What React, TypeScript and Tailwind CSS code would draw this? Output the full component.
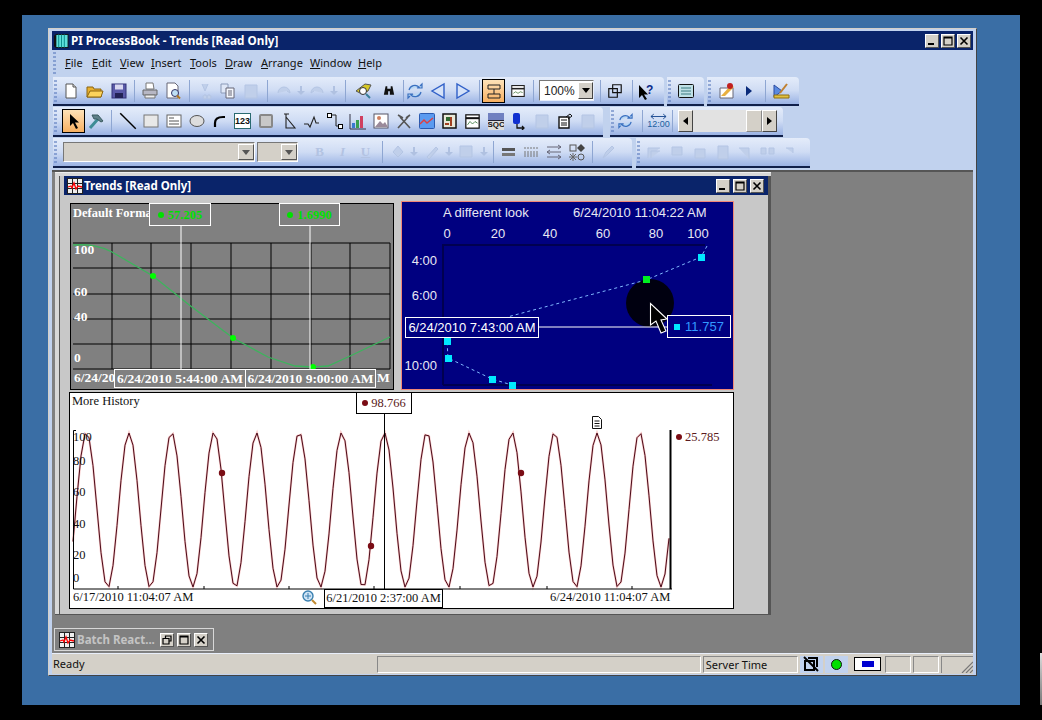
import React from 'react'

const ui = { fontFamily: '"Noto Sans", "Liberation Sans", sans-serif' }

// ---- small helpers ----
const Slot = ({ w = 'w-[23px]', children }: { w?: string; children?: React.ReactNode }) => (
  <div className={`${w} h-[24px] shrink-0 flex items-center justify-center`}>{children}</div>
)

const Sep = ({ w = 'w-[8px]' }: { w?: string }) => (
  <div className={`${w} h-[24px] shrink-0 flex items-center justify-center`}>
    <div className="w-px h-[22px] bg-[#8ea6d2]"></div>
  </div>
)

const Grip = ({ w = 'w-[7px]' }: { w?: string }) => (
  <div className={`${w} h-full shrink-0 flex flex-col justify-center gap-[2px] pl-[1px]`}>
    {[0, 1, 2, 3, 4, 5].map((i) => (
      <div key={i} className="w-[3px] h-[2px] bg-[#5f7fc0] opacity-60"></div>
    ))}
  </div>
)

const Ico = ({ children, size = 'w-[18px] h-[18px]' }: { children: React.ReactNode; size?: string }) => (
  <svg viewBox="0 0 18 18" className={size}>
    {children}
  </svg>
)

const Ghost = ({ d }: { d: string }) => (
  <Ico>
    <path d={d} fill="#c0cfea" stroke="#b4c5e4" strokeWidth="1" />
  </Ico>
)

const Arrow = () => (
  <svg viewBox="0 0 8 10" className="w-[8px] h-[10px]">
    <path d="M3 0h2v5h3l-4 4-4-4h3z" fill="#b0c1e1" />
  </svg>
)

const WinBtn = ({ kind, w = 'w-[14px]' }: { kind: 'min' | 'max' | 'close' | 'restore'; w?: string }) => (
  <div className={`${w} h-[14px] bg-[#d4d0c8] border border-t-white border-l-white border-r-[#555] border-b-[#555] flex items-center justify-center`}>
    <svg viewBox="0 0 10 10" className="w-[10px] h-[10px]">
      {kind === 'min' && <rect x="1" y="7" width="6" height="2" fill="#000" />}
      {kind === 'max' && <path d="M1 1h8v8H1z M1 2h8" fill="none" stroke="#000" strokeWidth="1.2" />}
      {kind === 'close' && <path d="M1.5 1.5l7 7M8.5 1.5l-7 7" stroke="#000" strokeWidth="1.6" />}
      {kind === 'restore' && <path d="M3.5 3V1h5.5v5H7 M1 3.5h6v5.5H1z" fill="none" stroke="#000" strokeWidth="1.2" />}
    </svg>
  </div>
)

const GridIcon = () => (
  <svg viewBox="0 0 16 16" className="w-[16px] h-[16px] shrink-0">
    <rect x="0.5" y="0.5" width="15" height="15" fill="#eee" stroke="#222" />
    <path d="M5.5 0v16M10.5 0v16M0 5.5h16M0 10.5h16" stroke="#222" />
    <path d="M1 9l3-1 1 2 2-5 2 6 2-3 4 1" fill="none" stroke="#f00" strokeWidth="1.3" />
  </svg>
)

const Combo = ({ w, bg = 'bg-[#d4d0c8]', children }: { w: string; bg?: string; children?: React.ReactNode }) => (
  <div className={`${w} ${bg} h-[20px] shrink-0 border border-t-[#777] border-l-[#777] border-r-white border-b-white flex items-center justify-end`}>
    <div className="flex-1 pl-[4px] text-[12px] text-[#222]">{children}</div>
    <div className="w-[16px] h-[16px] bg-[#d4d0c8] border border-t-white border-l-white border-r-[#555] border-b-[#555] flex items-center justify-center">
      <svg viewBox="0 0 8 5" className="w-[8px] h-[5px]">
        <path d="M0 0h8L4 5z" fill="#555" />
      </svg>
    </div>
  </div>
)

const Band = ({ w, children }: { w: string; children: React.ReactNode }) => (
  <div className={`${w} h-full shrink-0 flex items-center rounded-tr-[4px] border-b-2 border-[#10204a] bg-linear-to-b from-[#e4ecfa] via-[#cfdcf4] to-[#9bb3e4]`}>
    {children}
  </div>
)

// ---- toolbar icons ----
const NewDoc = () => (
  <Ico>
    <path d="M4 2h7l3 3v11H4z" fill="#fff" stroke="#555" />
    <path d="M11 2v3h3" fill="#ddd" stroke="#555" />
  </Ico>
)
const OpenDoc = () => (
  <Ico>
    <path d="M1 5h6l1 2h7v8H1z" fill="#e8b030" stroke="#8a6410" />
    <path d="M4 9h13l-2 6H1z" fill="#fcd35c" stroke="#8a6410" />
  </Ico>
)
const Save = () => (
  <Ico>
    <rect x="2" y="2" width="14" height="14" fill="#5a5aa8" stroke="#333378" />
    <rect x="5" y="2.5" width="8" height="5" fill="#d8d8f0" />
    <rect x="5" y="11" width="8" height="5" fill="#222255" />
  </Ico>
)
const Printer = () => (
  <Ico>
    <path d="M5 1h7l1 6H5z" fill="#fff" stroke="#777" />
    <path d="M2 8h14v5H2z" fill="#b7b7c4" stroke="#666" />
    <path d="M4 13h10v3H4z" fill="#eee" stroke="#777" />
  </Ico>
)
const Preview = () => (
  <Ico>
    <path d="M3 1h8l3 3v12H3z" fill="#fff" stroke="#667" />
    <circle cx="11" cy="11" r="3.5" fill="#bfe0f5" stroke="#336" />
    <path d="M13 13.5l3 3" stroke="#b07820" strokeWidth="2" />
  </Ico>
)
const Refresh = () => (
  <Ico>
    <path d="M3 8a6 6 0 0 1 10-3l-2 1h5V2l-2 2M15 10a6 6 0 0 1-10 3l2-1H2v4l2-2" fill="#b8d8f4" stroke="#3a70c0" strokeWidth="1.2" />
  </Ico>
)
const Play = ({ back = false }: { back?: boolean }) => (
  <Ico>
    <path d={back ? 'M15 2v14L3 9z' : 'M3 2v14l12-7z'} fill="#d5e2f8" stroke="#3060c8" strokeWidth="1.4" />
  </Ico>
)
const Hammer = () => (
  <Ico>
    <path d="M3 16L11 7" stroke="#3e8c96" strokeWidth="3" />
    <path d="M5 3h6l5 6-2 1-4-3-3 0z" fill="#5f8088" stroke="#3a5a60" />
  </Ico>
)

const Row1 = () => (
  <div className="h-[29px] flex gap-[3px]">
    <Band w="w-[611px]">
      <Grip w="w-[6px]" />
      <Slot w="w-[24px]"><NewDoc /></Slot>
      <Slot w="w-[24px]"><OpenDoc /></Slot>
      <Slot w="w-[24px]"><Save /></Slot>
      <Sep w="w-[7px]" />
      <Slot><Printer /></Slot>
      <Slot w="w-[24px]"><Preview /></Slot>
      <Sep />
      <Slot><Ghost d="M6 2l3 7 3-7M7 15a2 2 0 1 0 0-.1M11 15a2 2 0 1 0 0-.1" /></Slot>
      <Slot>
        <Ico>
          <path d="M2 2h7v9H2z" fill="#dfe7f7" stroke="#8a9ab8" />
          <path d="M7 6h8v10H7z" fill="#f4f7fd" stroke="#667" />
          <path d="M9 9h4M9 11h4M9 13h4" stroke="#667" />
        </Ico>
      </Slot>
      <Slot><Ghost d="M3 3h12v13H3z" /></Slot>
      <Sep w="w-[10px]" />
      <Slot w="w-[24px]"><Ghost d="M3 11a6 6 0 0 1 12 0l-3-2" /></Slot>
      <Slot w="w-[9px]"><Arrow /></Slot>
      <Slot><Ghost d="M15 11a6 6 0 0 0-12 0l3-2" /></Slot>
      <Slot w="w-[11px]"><Arrow /></Slot>
      <Sep w="w-[13px]" />
      <Slot w="w-[24px]">
        <Ico>
          <path d="M1 9l9-7 6 1-3 6-6 3z" fill="#d6c826" stroke="#555" />
          <circle cx="8" cy="9" r="3.5" fill="#fff" stroke="#333" />
          <path d="M11 12l4 4" stroke="#3a7f9a" strokeWidth="2" />
        </Ico>
      </Slot>
      <Slot w="w-[26px]">
        <svg viewBox="0 0 14 12" className="w-[12px] h-[11px]">
          <path d="M3 1h2v3h4V1h2l2 10H8V7H6v4H1z" fill="#111" />
        </svg>
      </Slot>
      <Sep w="w-[2px]" />
      <Slot w="w-[22px]"><Refresh /></Slot>
      <Slot w="w-[24px]"><Play back /></Slot>
      <Slot w="w-[26px]"><Play /></Slot>
      <Sep w="w-[6px]" />
      <div className="w-[23px] h-[24px] shrink-0 flex items-center justify-center bg-linear-to-b from-[#fde2b8] to-[#f8b060] border border-black">
        <Ico>
          <path d="M3 3h12v4H3zM3 12h12v4H3zM9 7v5" fill="none" stroke="#222" />
        </Ico>
      </div>
      <Slot w="w-[25px]">
        <Ico size="w-[14px] h-[14px]">
          <rect x="1" y="2" width="16" height="14" fill="#fff" stroke="#222" strokeWidth="1.4" />
          <path d="M1 6h16" stroke="#222" strokeWidth="2" />
          <path d="M3 12l3-2 3 2 3-2 3 1" fill="none" stroke="#4a7a40" />
        </Ico>
      </Slot>
      <Sep w="w-[6px]" />
      <div className="w-[3px]"></div>
      <div className="w-[55px] h-[21px] shrink-0 bg-white border border-t-[#777] border-l-[#777] border-b-[#e8eefa] border-r-[#e8eefa] flex items-center">
        <span className="flex-1 pl-[4px] text-[12px] text-[#222]" style={{ fontFamily: 'Liberation Sans' }}>100%</span>
        <div className="w-[15px] h-[17px] bg-[#d4d0c8] border border-t-white border-l-white border-r-[#444] border-b-[#444] flex items-center justify-center">
          <svg viewBox="0 0 8 5" className="w-[8px] h-[5px]"><path d="M0 0h8L4 5z" fill="#000" /></svg>
        </div>
      </div>
      <Sep w="w-[12px]" />
      <Slot w="w-[18px]">
        <Ico size="w-[14px] h-[14px]">
          <path d="M6 1h11v10H6z M1 6h11v11H1z" fill="none" stroke="#111" strokeWidth="1.5" />
        </Ico>
      </Slot>
      <Sep w="w-[16px]" />
      <div className="w-[14px] h-[24px] shrink-0 flex items-center justify-center">
        <Ico size="w-[18px] h-[18px] shrink-0">
          <path d="M1 3v13l3-3 3 5 2-1-3-4.5h4z" fill="#000" />
          <text x="8" y="12" fontSize="12" fontWeight="bold" fill="#0a2a8a" fontFamily="Liberation Sans">?</text>
        </Ico>
      </div>
    </Band>
    <Band w="w-[37px]">
      <Grip w="w-[7px]" />
      <div className="w-[24px] flex justify-center">
        <svg viewBox="0 0 16 14" className="w-[16px] h-[14px]">
          <rect x="0.5" y="0.5" width="15" height="13" rx="1" fill="#bfe0e6" stroke="#111" />
          <path d="M3 4h10M3 7h10M3 10h10" stroke="#3a7a80" />
        </svg>
      </div>
    </Band>
    <Band w="w-[92px]">
      <Grip w="w-[8px]" />
      <Slot w="w-[24px]">
        <Ico>
          <path d="M2 6h13v10H2z" fill="#fff" stroke="#667" />
          <path d="M3 14L13 3l3 2-9 9z" fill="#e8b040" />
          <circle cx="12" cy="4" r="3" fill="#c02020" />
        </Ico>
      </Slot>
      <Slot w="w-[20px]">
        <svg viewBox="0 0 6 10" className="w-[6px] h-[10px]"><path d="M0 0l6 5-6 5z" fill="#0a2a7a" /></svg>
      </Slot>
      <Sep w="w-[12px]" />
      <Slot w="w-[20px]">
        <Ico>
          <path d="M2 3v12l8-6z" fill="#5a8ae0" stroke="#2a4aa0" />
          <path d="M2 13h15v3H2z" fill="#e0c040" stroke="#907010" />
          <path d="M8 11l7-9" stroke="#c08030" strokeWidth="2" />
        </Ico>
      </Slot>
    </Band>
  </div>
)

const Row2 = () => (
  <div className="h-[30px] mt-px flex gap-[7px]">
    <Band w="w-[550px]">
      <Grip w="w-[9px]" />
      <div className="w-[23px] h-[24px] shrink-0 flex items-center justify-center bg-linear-to-b from-[#fde2b8] to-[#f8b060] border border-black">
        <Ico><path d="M5 2v12l3-3 3 6 2-1-3-5.5h4z" fill="#000" /></Ico>
      </div>
      <Slot w="w-[22px]"><Hammer /></Slot>
      <Sep w="w-[9px]" />
      <Slot><Ico size="w-[20px] h-[20px]"><path d="M2 2l14 14" stroke="#000" strokeWidth="1.3" /></Ico></Slot>
      <Slot><Ico><rect x="2" y="3" width="14" height="12" fill="#e8e8e8" stroke="#777" /></Ico></Slot>
      <Slot>
        <Ico>
          <rect x="2" y="3" width="14" height="12" fill="#fff" stroke="#666" />
          <path d="M4 6h5M4 9h10M4 12h10" stroke="#555" />
        </Ico>
      </Slot>
      <Slot><Ico><ellipse cx="9" cy="9" rx="7" ry="5.5" fill="#ddd" stroke="#555" /></Ico></Slot>
      <Slot><Ico><path d="M4 15V11Q4 5 12 5h2" fill="none" stroke="#000" strokeWidth="2.2" /></Ico></Slot>
      <Slot>
        <div className="w-[17px] h-[16px] bg-white border border-[#2a6a70] flex items-center justify-center text-[9px] font-bold text-[#111] leading-none" style={{ fontFamily: 'Liberation Sans' }}>123</div>
      </Slot>
      <Slot><div className="w-[14px] h-[14px] bg-[#c8c8c8] border-2 border-[#888] rounded-[2px]"></div></Slot>
      <Slot><Ico><path d="M4 2h5M6 2v14h9L6 5" fill="none" stroke="#222" strokeWidth="1.1" /></Ico></Slot>
      <Slot><Ico><path d="M1 12h4l2 3 4-10 2 6h3" fill="none" stroke="#222" strokeWidth="1.1" /></Ico></Slot>
      <Slot>
        <Ico>
          <path d="M4 3h6v11h4" fill="none" stroke="#222" />
          <rect x="1.5" y="1.5" width="4" height="4" fill="#fff" stroke="#000" />
          <rect x="12.5" y="12.5" width="4" height="4" fill="#fff" stroke="#000" />
        </Ico>
      </Slot>
      <Slot>
        <Ico>
          <path d="M1 2v15h16" fill="none" stroke="#334" />
          <rect x="3" y="11" width="3" height="5" fill="#3a7ad0" />
          <rect x="7" y="8" width="3" height="8" fill="#3aa050" />
          <rect x="11" y="4" width="3" height="12" fill="#d04060" />
        </Ico>
      </Slot>
      <Slot>
        <Ico>
          <rect x="2" y="2" width="14" height="14" fill="#fff" stroke="#556" />
          <path d="M3 15l5-6 3 3 2-2 3 5z" fill="#9a8a9a" />
          <circle cx="7" cy="6" r="2" fill="#d08060" />
        </Ico>
      </Slot>
      <Slot><Ico><path d="M3 16L13 5M15 16L5 5M3 3l5 3M15 3l-4 3" stroke="#555" strokeWidth="1.6" fill="none" /></Ico></Slot>
      <Slot>
        <Ico>
          <rect x="1.5" y="1.5" width="15" height="15" rx="1" fill="#5a9af0" stroke="#2a5ab0" />
          <path d="M2 12l4-4 3 3 6-5" fill="none" stroke="#e04040" strokeWidth="1.5" />
        </Ico>
      </Slot>
      <Slot>
        <Ico>
          <rect x="2" y="2" width="13" height="14" fill="#e8e8d8" stroke="#111" strokeWidth="1.5" />
          <path d="M5 5h4v4H5z" fill="#306830" />
          <path d="M10 5v9M4 12h4" stroke="#a04020" strokeWidth="2" />
        </Ico>
      </Slot>
      <Slot>
        <Ico size="w-[15px] h-[15px]">
          <rect x="1" y="1" width="16" height="16" fill="#fff" stroke="#111" strokeWidth="1.5" />
          <path d="M1 5h16" stroke="#111" strokeWidth="2.4" />
          <path d="M3 13l3-4 3 3 3-3 3 2" fill="none" stroke="#3a7a40" />
        </Ico>
      </Slot>
      <Slot>
        <div className="w-[16px] h-[17px] flex flex-col overflow-hidden leading-none">
          <div className="h-[8px] bg-[#7080c0] border-b border-[#223]"></div>
          <div className="text-[8px] font-bold text-[#111] bg-[#ddd] h-[9px] text-center" style={{ fontFamily: 'Liberation Sans' }}>SQC</div>
        </div>
      </Slot>
      <Slot>
        <Ico>
          <rect x="3" y="1" width="7" height="11" rx="2" fill="#1030d0" />
          <path d="M7 12v4h7M12 14l2 2-2 2" fill="none" stroke="#111" strokeWidth="1.3" />
        </Ico>
      </Slot>
      <Slot><Ghost d="M3 3h12v13H3z" /></Slot>
      <Slot>
        <Ico>
          <path d="M3 5h10v11H3z" fill="#fff" stroke="#111" strokeWidth="1.4" />
          <path d="M5 8h6M5 11h6M5 13h6M10 5l4-3 2 2-4 3" fill="none" stroke="#111" />
        </Ico>
      </Slot>
      <Slot><Ghost d="M3 3h12v13H3z" /></Slot>
    </Band>
    <Band w="w-[173px]">
      <Grip w="w-[7px]" />
      <Slot w="w-[17px]"><Refresh /></Slot>
      <Sep w="w-[16px]" />
      <div className="w-[17px] shrink-0 flex flex-col items-center leading-none">
        <svg viewBox="0 0 18 7" className="w-[17px] h-[7px] shrink-0"><path d="M1 3.5h16M4 1L1 3.5 4 6M14 1l3 2.5L14 6" fill="none" stroke="#1c4a90" /></svg>
        <span className="text-[9px] text-[#2060a0]" style={{ fontFamily: 'Liberation Sans' }}>12:00</span>
      </div>
      <Sep w="w-[11px]" />
      <div className="w-[99px] h-[22px] shrink-0 flex bg-[#e2e2e2]">
        <div className="w-[15px] bg-[#d4d0c8] border border-t-white border-l-white border-r-[#444] border-b-[#444] flex items-center justify-center">
          <svg viewBox="0 0 5 8" className="w-[5px] h-[8px]"><path d="M5 0v8L0 4z" fill="#000" /></svg>
        </div>
        <div className="w-[53px]"></div>
        <div className="w-[16px] bg-[#d4d0c8] border border-t-white border-l-white border-r-[#888] border-b-[#888]"></div>
        <div className="w-[15px] bg-[#d4d0c8] border border-t-white border-l-white border-r-[#444] border-b-[#444] flex items-center justify-center">
          <svg viewBox="0 0 5 8" className="w-[5px] h-[8px]"><path d="M0 0v8l5-4z" fill="#000" /></svg>
        </div>
      </div>
    </Band>
  </div>
)

const ghostLetter = 'w-[23px] text-center text-[13px] font-bold text-[#b3c3e2] shrink-0'

const Row3 = () => (
  <div className="h-[30px] mt-px flex gap-[4px]">
    <Band w="w-[579px]">
      <Grip w="w-[10px]" />
      <Combo w="w-[192px]" />
      <div className="w-[2px]"></div>
      <Combo w="w-[41px]" />
      <div className="w-[10px]"></div>
      <div className={ghostLetter} style={{ fontFamily: 'Liberation Serif' }}>B</div>
      <div className={ghostLetter} style={{ fontFamily: 'Liberation Serif' }}><i>I</i></div>
      <div className={ghostLetter} style={{ fontFamily: 'Liberation Serif' }}><u>U</u></div>
      <Sep w="w-[11px]" />
      <Slot w="w-[20px]"><Ghost d="M4 9l5-6 5 6-5 5z" /></Slot>
      <Slot w="w-[12px]"><Arrow /></Slot>
      <Slot w="w-[24px]"><Ghost d="M4 14L13 4l2 2-9 10z" /></Slot>
      <Slot w="w-[10px]"><Arrow /></Slot>
      <Slot w="w-[24px]"><Ghost d="M3 3h12v11H3z" /></Slot>
      <Slot w="w-[12px]"><Arrow /></Slot>
      <Sep w="w-[7px]" />
      <Slot w="w-[22px]">
        <div className="w-[13px] h-[8px] flex flex-col justify-between">
          <div className="h-[3px] bg-[#555]"></div>
          <div className="h-[3px] bg-[#777]"></div>
        </div>
      </Slot>
      <Slot>
        <Ico><path d="M2 5h14M2 9h14M2 11h14M2 13h14" stroke="#777" strokeDasharray="2 1" /></Ico>
      </Slot>
      <Slot>
        <Ico><path d="M2 4h14M2 14h14M2 9h14M5 7L2 9l3 2M13 2l3 2-3 2M13 12l3 2-3 2" fill="none" stroke="#667" /></Ico>
      </Slot>
      <Slot>
        <Ico>
          <rect x="2" y="2" width="6" height="6" fill="none" stroke="#555" />
          <path d="M13 1l4 4-4 4-4-4z" fill="#444" />
          <path d="M2 11l6 6M8 11l-6 6M5 10v8M1 14h8" stroke="#666" />
          <circle cx="13" cy="14" r="3" fill="none" stroke="#555" />
        </Ico>
      </Slot>
      <Sep w="w-[9px]" />
      <Slot w="w-[22px]"><Ghost d="M4 15l3-6 6-6 2 2-6 6z" /></Slot>
    </Band>
    <Band w="w-[174px]">
      <Grip w="w-[7px]" />
      <Slot w="w-[22px]"><Ghost d="M3 15V5h12M6 15V8h9" /></Slot>
      <Slot w="w-[23px]"><Ghost d="M4 4h10v8H4z" /></Slot>
      <Slot w="w-[23px]"><Ghost d="M4 15V6h10v9z" /></Slot>
      <Slot w="w-[24px]"><Ghost d="M4 3h10v13H4z" /></Slot>
      <Slot w="w-[20px]"><Ghost d="M3 5h10v11" /></Slot>
      <Slot w="w-[24px]"><Ghost d="M3 5h5v6H3zM11 5h5v6h-5z" /></Slot>
      <Slot w="w-[20px]"><Ghost d="M6 5h7v5" /></Slot>
    </Band>
  </div>
)

// ---- charts ----
const Tick = ({ c, className }: { c: string; className: string }) => (
  <span className={`inline-block w-[6px] h-[6px] ${c} ${className}`}></span>
)

const GrayChart = () => {
  const serif = { fontFamily: '"Liberation Serif", serif' }
  return (
    <div className="relative w-[324px] h-[187px] ml-px mt-[2px] shrink-0 bg-[#808080] border border-black text-white font-bold text-[13.5px] leading-[14px] whitespace-nowrap" style={serif}>
      <svg viewBox="71 204 322 185" className="absolute left-0 top-0 w-[322px] h-[185px]">
        <path d="M73 243H390M73 268H390M73 294H390M73 319H390M73 344H390M73 369H390M112 243V369M151 243V369M191 243V369M231 243V369M271 243V369M311 243V369M350 243V369M390 243V369" stroke="#000" strokeWidth="1" fill="none" />
        <path d="M73 245C90 244 100 246 112 252L153 276L188 304L233 338L268 357L295 366L313 367L328 366L348 357L390 337" fill="none" stroke="#3cb45c" strokeWidth="1.3" />
        <circle cx="153" cy="276" r="3" fill="#00ff00" />
        <circle cx="233" cy="338" r="3" fill="#00ff00" />
        <circle cx="313" cy="367" r="3" fill="#00ff00" />
        <path d="M181 226V369M310 226V369" stroke="#fff" />
      </svg>
      <div className="absolute left-[2px] top-[2px] text-[12.5px]">Default Forma</div>
      <div className="absolute left-[78px] top-[-1px] w-[62px] h-[23px] bg-[#808080] border border-white text-[#00e000] flex items-center justify-center gap-[4px] text-[12.5px]">
        <Tick c="bg-[#00e000]" className="rounded-full" />57.205
      </div>
      <div className="absolute left-[208px] top-[-1px] w-[61px] h-[23px] bg-[#808080] border border-white text-[#00e000] flex items-center justify-center gap-[4px] text-[12.5px]">
        <Tick c="bg-[#00e000]" className="rounded-full" />1.6990
      </div>
      <div className="absolute left-[3px] top-[39px]">100</div>
      <div className="absolute left-[3px] top-[81px]">60</div>
      <div className="absolute left-[3px] top-[106px]">40</div>
      <div className="absolute left-[3px] top-[147px]">0</div>
      <div className="absolute left-[3px] top-[167px]">6/24/20</div>
      <div className="absolute left-[306px] top-[167px]">M</div>
      <div className="absolute left-[43px] top-[165px] w-[132px] h-[19px] bg-[#808080] border border-white flex items-center justify-center">6/24/2010 5:44:00 AM</div>
      <div className="absolute left-[174px] top-[165px] w-[131px] h-[19px] bg-[#808080] border border-white flex items-center justify-center">6/24/2010 9:00:00 AM</div>
    </div>
  )
}

const bluePts: [number, number][] = [[701, 257], [447, 341], [448, 358], [492, 379], [512, 385]]

const BlueChart = () => (
  <div className="relative w-[333px] h-[189px] shrink-0 bg-[#000080] border border-[#f08878] overflow-hidden text-[13px] leading-[14px] text-[#e8e8f4] whitespace-nowrap" style={{ fontFamily: '"Liberation Sans", sans-serif' }}>
    <svg viewBox="402 202 331 187" className="absolute left-0 top-0 w-[331px] h-[187px]">
      <path d="M443 385V245H705M443 385H712" fill="none" stroke="#000050" strokeWidth="2" />
      <circle cx="650" cy="303" r="24" fill="#000010" />
      <path d="M707 246L701 257L646 280L511 316L453 337L447 341L448 358L492 379L512 385" fill="none" stroke="#80b8ff" strokeWidth="1" strokeDasharray="3 3" />
      {bluePts.map(([x, y]) => (
        <rect key={x} x={x - 3} y={y - 3} width="7" height="7" fill="#00e8ff" />
      ))}
      <rect x="643" y="276" width="7" height="7" fill="#00f020" />
      <path d="M539 327H667" stroke="#fff" />
    </svg>
    <div className="absolute left-[41px] top-[4px]">A different look</div>
    <div className="absolute left-[171px] top-[4px]">6/24/2010 11:04:22 AM</div>
    <div className="absolute left-[29px] top-[25px] w-[32px] text-center">0</div>
    <div className="absolute left-[80px] top-[25px] w-[32px] text-center">20</div>
    <div className="absolute left-[132px] top-[25px] w-[32px] text-center">40</div>
    <div className="absolute left-[185px] top-[25px] w-[32px] text-center">60</div>
    <div className="absolute left-[238px] top-[25px] w-[32px] text-center">80</div>
    <div className="absolute left-[280px] top-[25px] w-[32px] text-center">100</div>
    <div className="absolute left-0 top-[52px] w-[35px] text-right">4:00</div>
    <div className="absolute left-0 top-[87px] w-[35px] text-right">6:00</div>
    <div className="absolute left-0 top-[157px] w-[35px] text-right">10:00</div>
    <div className="absolute left-[3px] top-[115px] w-[134px] h-[21px] bg-[#000080] border border-white text-white flex items-center justify-center">6/24/2010 7:43:00 AM</div>
    <div className="absolute left-[265px] top-[113px] w-[64px] h-[23px] bg-[#000080] border border-white text-[#3399ff] flex items-center justify-center gap-[5px]">
      <Tick c="bg-[#00e8ff]" className="" />11.757
    </div>
    <svg viewBox="402 202 331 187" className="absolute left-0 top-0 w-[331px] h-[187px]">
      <path d="M650.5 303.5V325L656 321L661 333L666 331L661 320L667 319Z" fill="#000" stroke="#fff" strokeWidth="1.1" />
    </svg>
  </div>
)

const wave = (() => {
  const pts: string[] = []
  for (let x = 73; x <= 669; x += 4) {
    const y = Math.min(587, Math.max(433, 510 - 78 * Math.cos(((x - 129) / 42.55) * 2 * Math.PI)))
    pts.push(`${x},${y.toFixed(1)}`)
  }
  return pts.join(' ')
})()

const WhiteChart = () => (
  <div className="relative w-[665px] h-[217px] mt-[2px] shrink-0 bg-white border border-black text-[12.5px] leading-[14px] text-[#111] whitespace-nowrap" style={{ fontFamily: '"Liberation Serif", serif' }}>
    <svg viewBox="70 393 663 215" className="absolute left-0 top-0 w-[663px] h-[215px]">
      <polyline points={wave} fill="none" stroke="#f8c8c8" strokeWidth="2.2" />
      <polyline points={wave} fill="none" stroke="#4a0a18" strokeWidth="1" />
      <path d="M76 430.5H73.5V589H672" fill="none" stroke="#000" />
      <path d="M118 586V589M204 586V589M289 586V589M374 586V589M460 586V589M547 586V589M632 586V589" stroke="#000" />
      <path d="M670.5 430V589" stroke="#000" strokeWidth="2" />
      <path d="M384.5 414V589" stroke="#000" />
      <circle cx="222" cy="473" r="3.2" fill="#7a0c14" />
      <circle cx="371" cy="546" r="3.2" fill="#7a0c14" />
      <circle cx="521" cy="473" r="3.2" fill="#7a0c14" />
      <path d="M592.5 416.5h6l3 3v9h-9zM594.5 421h5M594.5 423.5h5M594.5 426h5" fill="#fff" stroke="#111" strokeWidth="1" />
      <circle cx="308" cy="596" r="5" fill="#cfe4f6" stroke="#3a80b0" strokeWidth="1.4" />
      <path d="M305 596h6M308 593v6" stroke="#3a80b0" />
      <path d="M312 600l4 4" stroke="#c08a30" strokeWidth="2" />
    </svg>
    <div className="absolute left-[2px] top-px">More History</div>
    <div className="absolute left-[286px] top-[-1px] w-[56px] h-[22px] bg-white border border-black text-[#5a1a20] flex items-center justify-center gap-[3px]">
      <Tick c="bg-[#7a0c14]" className="rounded-full" />98.766
    </div>
    <div className="absolute left-[3px] top-[37px]">100</div>
    <div className="absolute left-[3px] top-[61px]">80</div>
    <div className="absolute left-[3px] top-[92px]">60</div>
    <div className="absolute left-[3px] top-[124px]">40</div>
    <div className="absolute left-[3px] top-[155px]">20</div>
    <div className="absolute left-[3px] top-[178px]">0</div>
    <div className="absolute left-[606px] top-[37px] text-[#5a1a20] flex items-center gap-[3px]">
      <Tick c="bg-[#7a0c14]" className="rounded-full" />25.785
    </div>
    <div className="absolute left-[3px] top-[197px]">6/17/2010 11:04:07 AM</div>
    <div className="absolute left-[254px] top-[196px] w-[119px] h-[20px] pb-px bg-white border border-black border-b-2 flex items-center justify-center">6/21/2010 2:37:00 AM</div>
    <div className="absolute left-[480px] top-[197px]">6/24/2010 11:04:07 AM</div>
  </div>
)

export default function App() {
  return (
    <div className="relative w-[1042px] h-[720px] bg-black overflow-hidden pt-[15px] pl-[22px]" style={ui}>
      <div className="absolute right-0 top-[653px] w-[2px] h-[52px] bg-linear-to-b from-[#ddd] to-[#777]"></div>
      <div className="w-[998px] h-[690px] bg-[#3a6ea5] pt-[13px] pl-[26px]">
        {/* main app window */}
        <div className="w-[929px] h-[648px] flex flex-col bg-[#c1d2ee] border border-t-[#d4d0c8] border-l-[#d4d0c8] border-r-[#444] border-b-[#444] px-[3px] pt-[2px] pb-[1px]">
          <div className="h-[19px] shrink-0 bg-[#0a246a] flex items-center pl-[2px] pr-[2px] text-white font-bold text-[11.7px] whitespace-nowrap">
            <svg viewBox="0 0 16 16" className="w-[15px] h-[16px] shrink-0 mr-[2px]">
              <rect x="2" y="1" width="13" height="14" fill="#5ee0dc" stroke="#111" />
              <path d="M5 1v14M8 1v14M11 1v14" stroke="#0a8a8a" />
              <rect x="0" y="2" width="2" height="12" fill="#111" />
            </svg>
            <span className="flex-1">PI ProcessBook - Trends [Read Only]</span>
            <div className="flex gap-[2px]">
              <WinBtn kind="min" />
              <WinBtn kind="max" />
              <WinBtn kind="close" />
            </div>
          </div>

          <div className="h-[26px] shrink-0 flex items-center text-[11px] text-[#111]">
            <Grip w="w-[13px]" />
            <div className="w-[27px]"><u>F</u>ile</div>
            <div className="w-[28px]"><u>E</u>dit</div>
            <div className="w-[31px]"><u>V</u>iew</div>
            <div className="w-[39px]"><u>I</u>nsert</div>
            <div className="w-[35px]"><u>T</u>ools</div>
            <div className="w-[36px]"><u>D</u>raw</div>
            <div className="w-[49px]"><u>A</u>rrange</div>
            <div className="w-[48px]"><u>W</u>indow</div>
            <div><u>H</u>elp</div>
          </div>

          <div className="h-[93px] shrink-0 pl-px pt-px text-[#222]">
            <Row1 />
            <Row2 />
            <Row3 />
          </div>

          {/* MDI client area */}
          <div className="relative flex-1 mt-px bg-[#808080] border-t-2 border-[#555]">
            <div className="absolute left-[3px] top-0 w-[716px] h-[443px] bg-[#d8d8d8] border-t border-b border-t-[#eee] border-b-[#555] pl-[4px] pt-[3px]">
              <div className="h-full bg-[#c8c8c8] border-l border-r-[3px] border-l-[#555] border-r-[#555] pl-[4px] flex flex-col">
                <div className="h-[19px] shrink-0 bg-[#0a246a] flex items-center pl-[3px] text-white font-bold text-[11.5px]">
                  <GridIcon />
                  <span className="flex-1 ml-px">Trends [Read Only]</span>
                  <div className="flex gap-[3px] mr-[4px]">
                    <WinBtn kind="min" />
                    <WinBtn kind="max" />
                    <WinBtn kind="close" />
                  </div>
                </div>
                <div className="flex-1 pl-[5px] pt-[6px] flex flex-col">
                  <div className="flex gap-[7px]">
                    <GrayChart />
                    <BlueChart />
                  </div>
                  <WhiteChart />
                </div>
              </div>
            </div>

            {/* minimized child window */}
            <div className="absolute left-[2px] top-[456px] w-[160px] h-[23px] bg-[#808080] border border-[#d8d8d8] flex items-center pl-[4px] text-[#c4c4c4] font-bold text-[11.5px]">
              <GridIcon />
              <span className="flex-1 ml-[2px] whitespace-nowrap">Batch React...</span>
              <div className="flex gap-[3px] mr-[5px]">
                <WinBtn kind="restore" />
                <WinBtn kind="max" />
                <WinBtn kind="close" />
              </div>
            </div>
          </div>

          {/* status bar */}
          <div className="h-[21px] shrink-0 border-t border-[#e8eefa] bg-[#d4d0c8] flex items-center text-[11px] text-[#111] gap-[2px]">
            <div className="w-[324px] pl-px">Ready</div>
            <div className="w-[325px] h-[17px] border border-t-[#888] border-l-[#888] border-r-white border-b-white"></div>
            <div className="w-[95px] h-[17px] pl-[2px] border border-t-[#888] border-l-[#888] border-r-white border-b-white leading-[15px] whitespace-nowrap">Server Time</div>
            <div className="w-[24px] h-[17px] bg-[#c1d2ee] flex items-center justify-center">
              <svg viewBox="0 0 16 16" className="w-[16px] h-[16px]">
                <path d="M2 5h9v9H2z M5 2h9v9" fill="none" stroke="#000" strokeWidth="2" />
                <path d="M1 1l14 14" stroke="#000" strokeWidth="2" />
              </svg>
            </div>
            <div className="w-[23px] h-[17px] bg-[#c1d2ee] flex items-center justify-center">
              <div className="w-[11px] h-[11px] rounded-full bg-[#00e000] border border-[#111]"></div>
            </div>
            <div className="ml-[4px] w-[27px] h-[14px] bg-white border border-black flex items-center justify-center">
              <div className="w-[12px] h-[6px] bg-[#0000d0]"></div>
            </div>
            <div className="ml-[2px] w-[26px] h-[17px] border border-t-[#888] border-l-[#888] border-r-white border-b-white"></div>
            <div className="w-[26px] h-[17px] border border-t-[#888] border-l-[#888] border-r-white border-b-white"></div>
            <div className="relative w-[32px] h-[17px] border-l border-t border-t-[#888] border-l-[#888]">
              <svg viewBox="0 0 12 12" className="absolute right-0 bottom-0 w-[12px] h-[12px]">
                <path d="M1 12L12 1M5 12l7-7M9 12l3-3" stroke="#777" strokeWidth="1.2" />
              </svg>
            </div>
          </div>
        </div>
      </div>
    </div>
  )
}
